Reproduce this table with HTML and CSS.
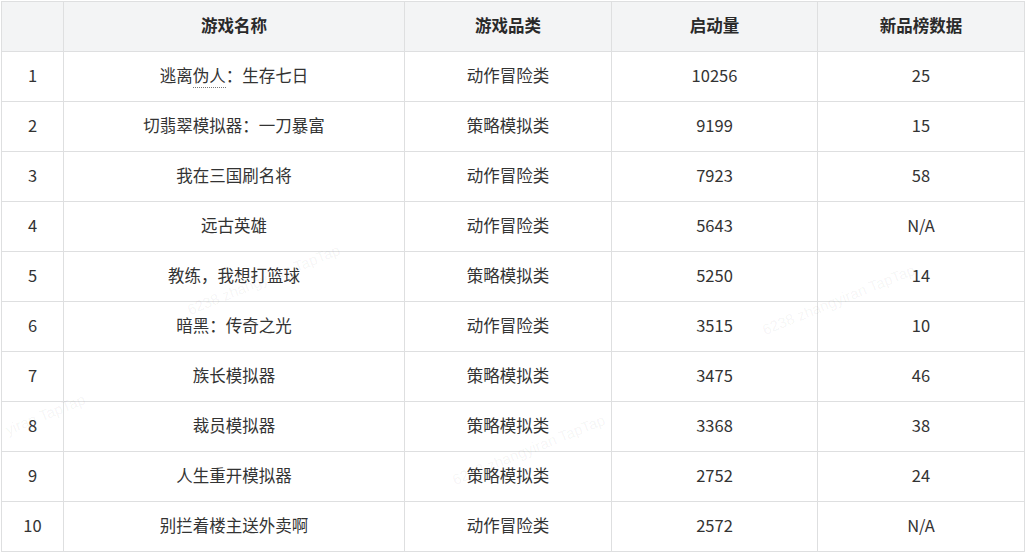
FILE: index.html
```html
<!DOCTYPE html>
<html lang="zh">
<head>
<meta charset="utf-8">
<title>新品榜</title>
<link rel="stylesheet" href="styles.css">
</head>
<body>
<div class="wrap">
<table class="rank">
  <colgroup>
    <col class="c-idx"><col class="c-name"><col class="c-cat"><col class="c-num"><col class="c-new">
  </colgroup>
  <thead>
    <tr><th></th><th>游戏名称</th><th>游戏品类</th><th>启动量</th><th>新品榜数据</th></tr>
  </thead>
  <tbody>
    <tr><td>1</td><td>逃离<span class="spell">伪人</span>：生存七日</td><td>动作冒险类</td><td>10256</td><td>25</td></tr>
    <tr><td>2</td><td>切翡翠模拟器：一刀暴富</td><td>策略模拟类</td><td>9199</td><td>15</td></tr>
    <tr><td>3</td><td>我在三国刷名将</td><td>动作冒险类</td><td>7923</td><td>58</td></tr>
    <tr><td>4</td><td>远古英雄</td><td>动作冒险类</td><td>5643</td><td>N/A</td></tr>
    <tr><td>5</td><td>教练，我想打篮球</td><td>策略模拟类</td><td>5250</td><td>14</td></tr>
    <tr><td>6</td><td>暗黑：传奇之光</td><td>动作冒险类</td><td>3515</td><td>10</td></tr>
    <tr><td>7</td><td>族长模拟器</td><td>策略模拟类</td><td>3475</td><td>46</td></tr>
    <tr><td>8</td><td>裁员模拟器</td><td>策略模拟类</td><td>3368</td><td>38</td></tr>
    <tr><td>9</td><td>人生重开模拟器</td><td>策略模拟类</td><td>2752</td><td>24</td></tr>
    <tr><td>10</td><td>别拦着楼主送外卖啊</td><td>动作冒险类</td><td>2572</td><td>N/A</td></tr>
  </tbody>
</table>
<div class="wm wm1">6238 zhangyiran TapTap</div>
<div class="wm wm2">6238 zhangyiran TapTap</div>
<div class="wm wm3">yiran TapTap</div>
<div class="wm wm4">6238 zhangyiran TapTap</div>
</div>
</body>
</html>
```
FILE: styles.css
```css
html, body {
  margin: 0;
  padding: 0;
  background: #ffffff;
}
body {
  padding: 1px 0 0 1px;
  font-family: "Noto Sans CJK SC", "Noto Sans", sans-serif;
  color: #333333;
}
.wrap {
  position: relative;
  width: 1024px;
  overflow: hidden;
}
.rank {
  border-collapse: collapse;
  table-layout: fixed;
  width: 1024px;
  font-size: 16.5px;
}
.c-idx { width: 62px; }
.c-name { width: 341px; }
.c-cat { width: 207px; }
.c-num { width: 206px; }
.c-new { width: 207px; }
.rank th, .rank td {
  border: 1px solid #dedfe0;
  height: 46px;
  padding: 0 0 3px 0;
  text-align: center;
  vertical-align: middle;
  line-height: 20px;
}
.rank th {
  background: #f3f4f5;
  font-weight: 700;
  color: #2a2a2a;
}
.rank td {
  color: #333333;
}
.spell {
  border-bottom: 1px dotted #777777;
}
.wm {
  position: absolute;
  font-family: "Liberation Sans", sans-serif;
  font-size: 15px;
  color: rgba(0, 0, 0, 0.05);
  transform: rotate(-22deg);
  transform-origin: left bottom;
  white-space: nowrap;
  pointer-events: none;
}
.wm1 { left: 190px; top: 300px; }
.wm2 { left: 765px; top: 320px; }
.wm3 { left: 8px; top: 420px; }
.wm4 { left: 455px; top: 470px; }
```
